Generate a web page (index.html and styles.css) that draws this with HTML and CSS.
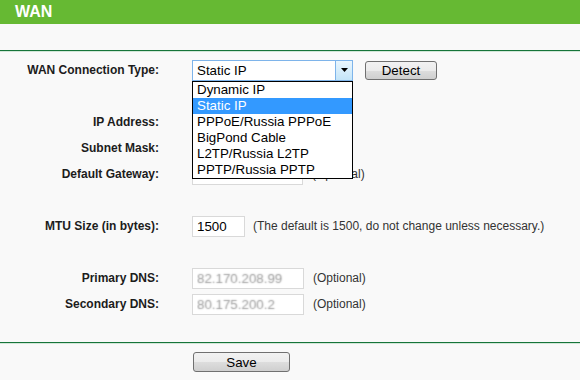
FILE: index.html
```html
<!DOCTYPE html>
<html>
<head>
<meta charset="utf-8">
<title>WAN</title>
<link rel="stylesheet" href="styles.css">
</head>
<body>
<div class="header">WAN</div>
<div class="top-space"></div>
<div class="rule"></div>
<div class="form">
  <div class="row">
    <label class="lbl">WAN Connection Type:</label>
    <div class="ctl">
      <div class="select">
        <span class="select-value">Static IP</span>
        <span class="select-arrow"><svg width="7" height="4" viewBox="0 0 7 4"><path d="M0 0H7L3.5 4Z" fill="#000"/></svg></span>
        <ul class="options">
          <li>Dynamic IP</li>
          <li class="selected">Static IP</li>
          <li>PPPoE/Russia PPPoE</li>
          <li>BigPond Cable</li>
          <li>L2TP/Russia L2TP</li>
          <li>PPTP/Russia PPTP</li>
        </ul>
      </div>
      <button class="btn btn-detect">Detect</button>
    </div>
  </div>
  <div class="row"></div>
  <div class="row">
    <label class="lbl">IP Address:</label>
    <div class="ctl"><input class="field field-ip" value=""></div>
  </div>
  <div class="row">
    <label class="lbl">Subnet Mask:</label>
    <div class="ctl"><input class="field field-ip" value=""></div>
  </div>
  <div class="row">
    <label class="lbl">Default Gateway:</label>
    <div class="ctl"><input class="field field-ip" value=""><span class="note note-opt">(Optional)</span></div>
  </div>
  <div class="row"></div>
  <div class="row">
    <label class="lbl">MTU Size (in bytes):</label>
    <div class="ctl"><input class="field field-mtu" value="1500"><span class="note note-mtu">(The default is 1500, do not change unless necessary.)</span></div>
  </div>
  <div class="row"></div>
  <div class="row">
    <label class="lbl">Primary DNS:</label>
    <div class="ctl"><input class="field field-dns field-blur" value="82.170.208.99"><span class="note note-opt">(Optional)</span></div>
  </div>
  <div class="row">
    <label class="lbl">Secondary DNS:</label>
    <div class="ctl"><input class="field field-dns field-blur" value="80.175.200.2"><span class="note note-opt">(Optional)</span></div>
  </div>
</div>
<div class="rule rule-bottom"></div>
<div class="actions"><button class="btn btn-save">Save</button></div>
</body>
</html>
```
FILE: styles.css
```css
html, body {
  margin: 0;
  padding: 0;
  background: #f9f9f9;
  font-family: "Liberation Sans", Arial, sans-serif;
}

.header {
  height: 24px;
  background: #66b933;
  color: #fff;
  font-weight: bold;
  font-size: 16px;
  line-height: 24px;
  padding-left: 15px;
}

.top-space {
  height: 26px;
}

.rule {
  border-top: 1px solid #16743a;
  border-bottom: 1px solid #d2e7d8;
}

.form {
  padding-top: 5px;
}

.row {
  display: grid;
  grid-template-columns: 159px 1fr;
  column-gap: 33px;
  height: 26px;
  align-items: center;
}

.lbl {
  text-align: right;
  font-weight: bold;
  font-size: 12px;
  color: #1c1c1c;
  white-space: nowrap;
}

.ctl {
  display: flex;
  align-items: center;
}

.select {
  position: relative;
  box-sizing: border-box;
  width: 161px;
  height: 21px;
  border: 1px solid #7eb4ea;
  background: #fff;
  display: flex;
  align-items: center;
}

.select-value {
  flex: 1;
  padding-left: 4px;
  font-size: 13.33px;
  color: #000;
}

.select-arrow {
  box-sizing: border-box;
  width: 17px;
  height: 19px;
  border-left: 1px solid #7eb4ea;
  background: linear-gradient(#eaf6fd, #c4e5f9);
  display: flex;
  align-items: center;
  justify-content: center;
}

.options {
  position: absolute;
  top: 20px;
  left: -1px;
  width: 161px;
  box-sizing: border-box;
  margin: 0;
  padding: 0;
  list-style: none;
  border: 1px solid #000;
  background: #fff;
  z-index: 5;
}

.options li {
  height: 16px;
  line-height: 16px;
  padding-left: 4px;
  font-size: 13.33px;
  color: #000;
  white-space: nowrap;
}

.options li.selected {
  background: #3399ff;
  color: #fff;
}

.btn {
  box-sizing: border-box;
  border: 1px solid #707070;
  border-radius: 3px;
  background: linear-gradient(#f2f2f2 0%, #ebebeb 50%, #dddddd 51%, #cfcfcf 100%);
  font-family: "Liberation Sans", Arial, sans-serif;
  font-size: 13.33px;
  color: #000;
  padding: 0;
}

.btn-detect {
  margin-left: 12px;
  width: 72px;
  height: 19px;
}

.field {
  box-sizing: border-box;
  height: 21px;
  border: 1px solid #d9d9d9;
  background: #fff;
  font-family: "Liberation Sans", Arial, sans-serif;
  font-size: 13.33px;
  color: #000;
  padding: 0 4px;
  margin: 0;
}

.field-ip {
  width: 111px;
}

.field-mtu {
  width: 53px;
}

.field-dns {
  width: 112px;
}

.field-blur {
  color: transparent;
  text-shadow: 0 0 1.5px #9a9a9a;
}

.note {
  font-size: 12px;
  color: #333;
  white-space: nowrap;
}

.note-opt {
  margin-left: 9px;
}

.note-mtu {
  margin-left: 8px;
}

.rule-bottom {
  margin-top: 25px;
}

.actions {
  padding-top: 8px;
  padding-left: 193px;
}

.btn-save {
  width: 97px;
  height: 20px;
}
```
